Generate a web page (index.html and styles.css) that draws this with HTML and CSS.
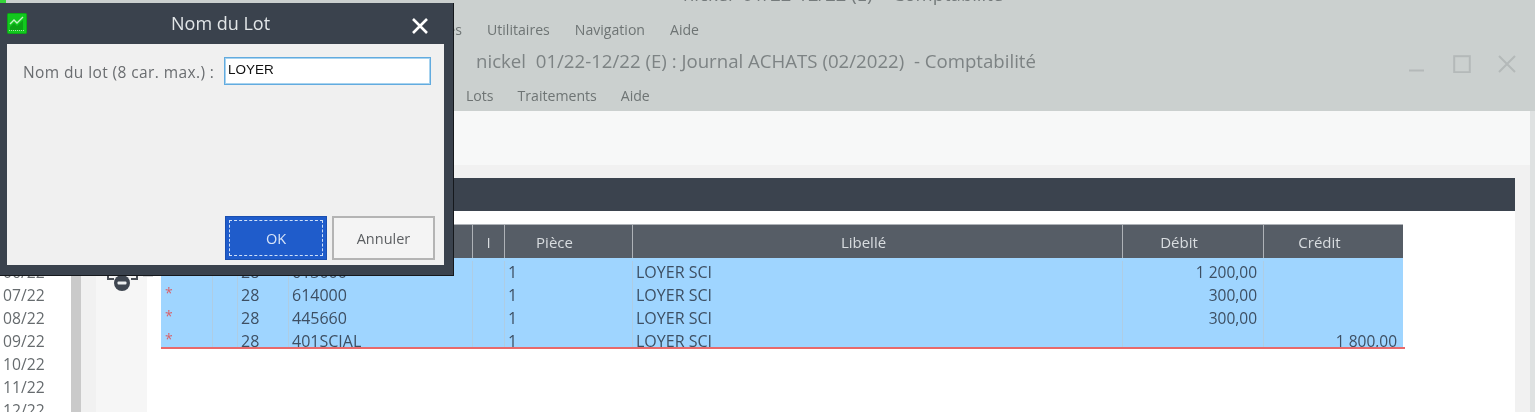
FILE: index.html
```html
<!DOCTYPE html>
<html lang="fr">
<head>
<meta charset="utf-8">
<title>Nom du Lot</title>
<link rel="stylesheet" href="styles.css">
</head>
<body>
<div class="page">
  <header class="chrome">
    <div class="app-title">nickel  01/22-12/22 (E)  - Comptabilité</div>
    <nav class="menu menu-app">
      <span class="menu-first">Fenêtres</span><span>Utilitaires</span><span>Navigation</span><span>Aide</span>
    </nav>
    <div class="doc-title">
      <span class="doc-name">nickel  01/22-12/22 (E) : Journal ACHATS (02/2022)  - Comptabilité</span>
      <div class="controls">
        <svg width="18" height="18" viewBox="0 0 18 18"><path d="M1 15.5h15" /></svg>
        <svg width="18" height="18" viewBox="0 0 18 18"><rect x="1.2" y="1.2" width="15.6" height="16" /></svg>
        <svg width="18" height="18" viewBox="0 0 18 18"><path d="M1 1l16 16M17 1L1 17" /></svg>
      </div>
    </div>
    <nav class="menu menu-doc">
      <span>Lots</span><span>Traitements</span><span>Aide</span>
    </nav>
  </header>
  <div class="work">
    <ul class="periods">
      <li>01/22</li><li>02/22</li><li>03/22</li><li>04/22</li><li>05/22</li><li>06/22</li>
      <li>07/22</li><li>08/22</li><li>09/22</li><li>10/22</li><li>11/22</li><li>12/22</li>
    </ul>
    <div class="split"></div>
    <div class="rail-a"></div>
    <div class="rail-b"></div>
    <main class="main">
      <div class="toolbar"></div>
      <div class="band"></div>
      <div class="sheet">
        <div class="grid">
          <div class="hd"></div><div class="hd"></div><div class="hd"></div><div class="hd"></div><div class="hd hd-i">I</div><div class="hd">Pièce</div><div class="hd">Libellé</div><div class="hd">Débit</div><div class="hd">Crédit</div>
          <div class="rows">
            <div class="row"><span class="c star">*</span><span class="c"></span><span class="c day">28</span><span class="c">613000</span><span class="c"></span><span class="c">1</span><span class="c">LOYER SCI</span><span class="c num">1 200,00</span><span class="c num"></span></div>
            <div class="row"><span class="c star">*</span><span class="c"></span><span class="c day">28</span><span class="c">614000</span><span class="c"></span><span class="c">1</span><span class="c">LOYER SCI</span><span class="c num">300,00</span><span class="c num"></span></div>
            <div class="row"><span class="c star">*</span><span class="c"></span><span class="c day">28</span><span class="c">445660</span><span class="c"></span><span class="c">1</span><span class="c">LOYER SCI</span><span class="c num">300,00</span><span class="c num"></span></div>
            <div class="row"><span class="c star">*</span><span class="c"></span><span class="c day">28</span><span class="c">401SCIAL</span><span class="c"></span><span class="c">1</span><span class="c">LOYER SCI</span><span class="c num"></span><span class="c num">1 800,00</span></div>
          </div>
        </div>
      </div>
    </main>
    <div class="edge"></div>
  </div>

  <svg class="tree-toggle" width="48" height="26" viewBox="0 0 48 26">
    <path class="tg-line" d="M1 10v4h6M30 10v4h-6"/>
    <path class="tg-faint" d="M36 11h10"/>
    <circle cx="15" cy="18" r="8" class="tg-dot"/>
    <rect x="10.5" y="16.5" width="9" height="3" rx="1" class="tg-minus"/>
  </svg>

  <span class="sliver"></span>
  <section class="dialog">
    <div class="dlg-bar">
      <svg class="dlg-icon" width="20" height="21" viewBox="0 0 20 21">
        <rect x="0.5" y="0.5" width="19" height="20" rx="1" fill="#12c81e" stroke="#0ca816"/>
        <path d="M3 14l4-4 3 3 6-6v10H3z" fill="#0ca216"/>
        <path d="M3 11l4-4 3 3 6-6" fill="none" stroke="#c4f2c4" stroke-width="1.4"/>
        <path d="M2 17.5h16" stroke="#a8e8a8" stroke-width="1" stroke-dasharray="1 1"/>
      </svg>
      <span class="dlg-title">Nom du Lot</span>
      <svg class="dlg-close" width="18" height="18" viewBox="0 0 18 18"><path d="M2 2l14 14M16 2L2 16"/></svg>
    </div>
    <div class="dlg-body">
      <div class="field">
        <span class="field-label">Nom du lot (8 car. max.) :</span>
        <span class="field-input">LOYER</span>
      </div>
      <div class="actions">
        <button class="btn btn-ok" type="button"><span class="focus">OK</span></button>
        <button class="btn btn-cancel" type="button">Annuler</button>
      </div>
    </div>
  </section>
</div>
</body>
</html>
```
FILE: styles.css
```css
* { box-sizing: border-box; }
html, body { margin: 0; padding: 0; }
body { font-family: "Open Sans", "Noto Sans", "Liberation Sans", sans-serif; background: #fff; }
.page { position: relative; width: 1535px; height: 412px; overflow: hidden; display: flex; flex-direction: column; filter: blur(0.35px); }

.chrome { height: 111px; background: #cbd0cf; color: #757b7c; flex: none; position: relative; overflow: hidden; }
.app-title { height: 22px; margin-top: -17px; margin-left: 683px; white-space: pre; font-size: 18.5px; line-height: 22px; }
.menu { display: flex; font-size: 14.1px; line-height: 18px; color: #6e7474; }
.menu-app { height: 22px; margin-top: 16px; padding-left: 400px; gap: 25px; }
.menu-first { width: 62px; text-align: right; }
.doc-title { display: flex; align-items: center; height: 36px; margin-top: 3px; padding-left: 476px; }
.doc-name { white-space: pre; font-size: 18.65px; line-height: 24px; color: #7d8384; margin-top: -6px; }
.controls { margin-left: auto; display: flex; gap: 27px; padding-right: 19px; }
.controls svg { fill: none; stroke: #b4b9b9; stroke-width: 2; display: block; }
.menu-doc { margin-top: 5px; padding-left: 466px; gap: 24px; }

.work { flex: 1; display: flex; min-height: 0; }
.periods { list-style: none; margin: 0; padding: 35px 0 0 3px; width: 71px; flex: none; background: #fff; color: #666b6e; font-size: 15.7px; line-height: 23px; }
.split { width: 10px; background: #cacaca; flex: none; }
.rail-a { width: 15px; background: #f1f1f1; flex: none; }
.rail-b { width: 51px; background: #f6f6f6; flex: none; }
.main { width: 1383px; flex: none; background: #f1f1f1; display: flex; flex-direction: column; }
.toolbar { height: 54px; background: #f7f8f8; flex: none; margin-right: -15px; }
.band { height: 33px; margin-top: 13px; margin-right: 15px; background: #3b434e; flex: none; }
.sheet { flex: 1; margin-right: 15px; background: #fff; padding: 13px 0 0 14px; }
.edge { flex: 1; background: #dfe2e2; }

.grid { display: grid; width: 1242px; grid-template-columns: 51px 25px 51px 184px 32px 128px 490px 141px 140px; grid-template-rows: 34px 91px; position: relative; }
.hd { background: #565d66; color: #d9dde0; border-left: 1px solid #aeb2b7; border-top: 1px solid #aeb2b7; font-size: 15px; font-weight: 500; display: flex; align-items: center; justify-content: center; padding-right: 28px; }
.hd-i { padding-right: 0; font-weight: 400; }
.rows { grid-column: 1 / -1; background: linear-gradient(#9fd5ff, #9fd5ff) no-repeat; background-size: calc(100% - 2px) 100%; border-bottom: 2px solid #e8696b; margin-right: -2px; padding-right: 2px; overflow: hidden; display: flex; flex-direction: column; padding-top: 3px; background-clip: padding-box; }
.row { display: grid; grid-template-columns: 51px 25px 51px 184px 32px 128px 490px 141px 140px; height: 23px; flex: none; font-size: 16px; line-height: 23px; color: #3d4f63; }
.c { padding-left: 4px; white-space: pre; box-shadow: inset 1px 0 0 #aecde4; }
.star { color: #d8626b; font-size: 14px; line-height: 17px; padding-left: 4px; box-shadow: none; }
.num { text-align: right; padding: 0 6px 0 0; font-size: 15.5px; }

.tree-toggle { position: absolute; left: 107px; top: 265px; }
.tg-line { fill: none; stroke: #4a4f56; stroke-width: 2; }
.tg-faint { fill: none; stroke: #c4c6c8; stroke-width: 1.5; }
.tg-dot { fill: #3f4650; }
.tg-minus { fill: #eceeef; }

.sliver { position: absolute; left: 0; top: 0; width: 6px; height: 3px; background: #35d43a; }
.dialog { position: absolute; left: 0; top: 3px; width: 454px; height: 273px; background: #3a424d; border-right: 1px solid #15181c; border-bottom: 1px solid #15181c; padding: 0 9px 10px 7px; display: flex; flex-direction: column; }
.dlg-bar { height: 41px; flex: none; display: flex; align-items: center; position: relative; }
.dlg-icon { flex: none; }
.dlg-title { position: absolute; left: 164px; top: 7px; font-size: 18px; line-height: 26px; color: #e2e6e8; }
.dlg-close { position: absolute; left: 404px; top: 14px; fill: none; stroke: #fff; stroke-width: 2.6; }
.dlg-body { flex: 1; background: #f0f0f0; display: flex; flex-direction: column; padding: 13px 9px 5px 16px; }
.field { display: flex; align-items: center; gap: 9px; }
.field-label { font-size: 15.5px; letter-spacing: 0.4px; color: #6a6d70; width: 192px; white-space: nowrap; padding-top: 2px; }
.field-input { width: 207px; height: 28px; background: #fff; border: 1px solid #62abdf; box-shadow: inset 0 0 0 1px #a8d3ef; font-family: "Liberation Sans", Arial, sans-serif; font-size: 13.5px; line-height: 22px; padding: 1px 0 0 3px; color: #111; }
.actions { margin-top: auto; display: flex; gap: 5px; padding-left: 202px; }
.btn { width: 102px; height: 44px; padding: 0; font: inherit; font-size: 14.5px; cursor: default; }
.btn-ok { background: #1f5ccb; border: 1px solid #1a4fb0; color: #d7e4f8; padding: 3px; }
.focus { display: flex; align-items: center; justify-content: center; height: 100%; border: 1px dashed #cfe0f8; }
.btn-cancel { width: 103px; background: #f4f4f4; border: 2px solid #b4b4b4; color: #5c5f62; }
```
